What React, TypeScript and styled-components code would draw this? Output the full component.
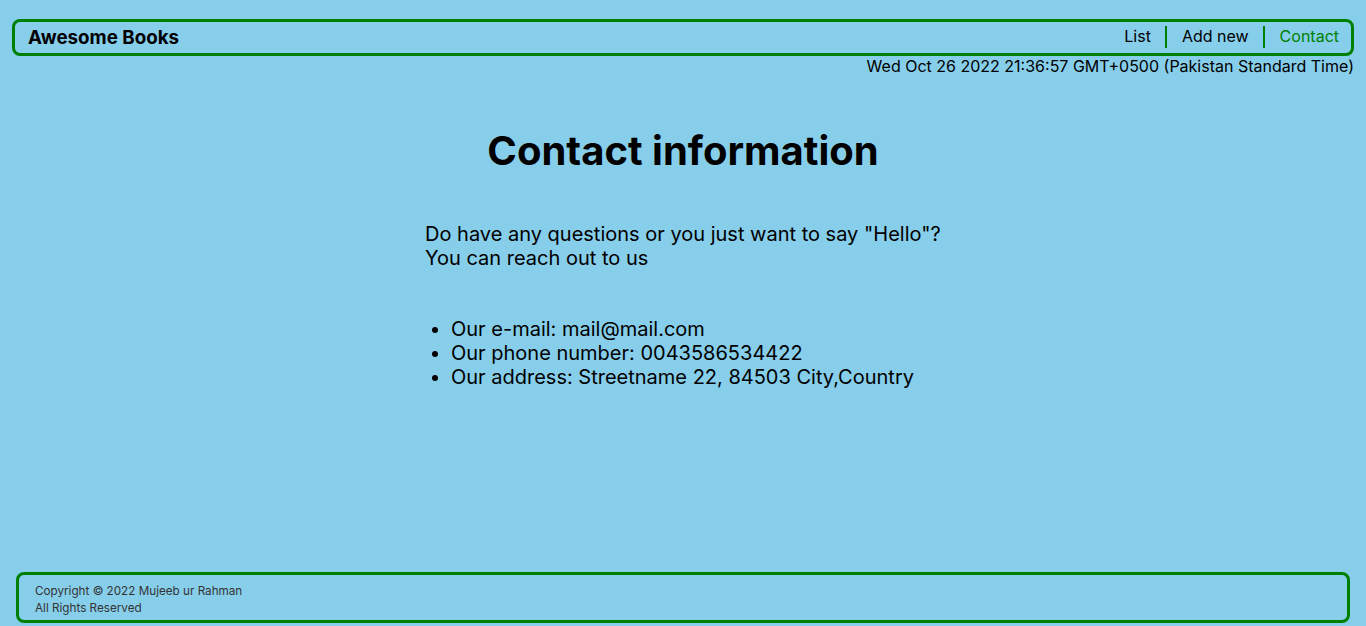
import React from "react";
import styled, { createGlobalStyle } from "styled-components";

const Global = createGlobalStyle`
  * { box-sizing: border-box; }
  html, body { margin: 0; padding: 0; background: #87ceeb; }
  body { font-family: Inter, "Noto Sans", sans-serif; color: #000; }
`;

const Page = styled.div`
  min-height: 100vh;
  display: flex;
  flex-direction: column;
`;

const Header = styled.header`
  margin: 19px 12px 0;
  border: 3px solid #008000;
  border-radius: 8px;
  padding: 4px 12px 5px 13px;
  display: flex;
  align-items: center;
  justify-content: space-between;
`;

const Brand = styled.h1`
  margin: 0;
  padding-top: 2px;
  font-size: 18.75px;
  font-weight: 700;
  line-height: 20px;
`;

const Nav = styled.nav`
  display: flex;
  align-items: center;
`;

const NavLink = styled.a<{ $active?: boolean; $first?: boolean }>`
  font-size: 16px;
  line-height: 20px;
  padding: 0 14px 2px ${(p) => (p.$first ? "0" : "15px")};
  border-left: ${(p) => (p.$first ? "none" : "2px solid #008000")};
  color: ${(p) => (p.$active ? "#008000" : "#000")};
  text-decoration: none;
  cursor: pointer;
  &:last-child { padding-right: 0; }
`;

const DateLine = styled.div`
  text-align: right;
  font-size: 16px;
  line-height: 19px;
  padding-right: 12px;
  margin-top: 1px;
`;

const Main = styled.main`
  display: flex;
  flex-direction: column;
  align-items: center;
`;

const Title = styled.h2`
  margin: 51px 0 0;
  font-size: 40px;
  font-weight: 700;
  line-height: 48px;
`;

const Section = styled.section`
  width: 516px;
  margin-top: 47px;
`;

const Lead = styled.p`
  margin: 0;
  font-size: 20px;
  line-height: 24px;
`;

const List = styled.ul`
  margin: 47px 0 0;
  padding-left: 26px;
  font-size: 20px;
  line-height: 24px;
`;

const Footer = styled.footer`
  margin: auto 16px 3px;
  border: 3px solid #008000;
  border-radius: 8px;
  padding: 8px 16px 3px;
  font-size: 11.7px;
  line-height: 17px;
  color: #333;
`;

export default function App() {
  return (
    <Page>
      <Global />
      <Header>
        <Brand>Awesome Books</Brand>
        <Nav>
          <NavLink $first>List</NavLink>
          <NavLink>Add new</NavLink>
          <NavLink $active>Contact</NavLink>
        </Nav>
      </Header>
      <DateLine>Wed Oct 26 2022 21:36:57 GMT+0500 (Pakistan Standard Time)</DateLine>
      <Main>
        <Title>Contact information</Title>
        <Section>
          <Lead>
            Do have any questions or you just want to say "Hello"?
            <br />
            You can reach out to us
          </Lead>
          <List>
            <li>Our e-mail: mail@mail.com</li>
            <li>Our phone number: 0043586534422</li>
            <li>Our address: Streetname 22, 84503 City,Country</li>
          </List>
        </Section>
      </Main>
      <Footer>
        <div>Copyright © 2022 Mujeeb ur Rahman</div>
        <div>All Rights Reserved</div>
      </Footer>
    </Page>
  );
}
